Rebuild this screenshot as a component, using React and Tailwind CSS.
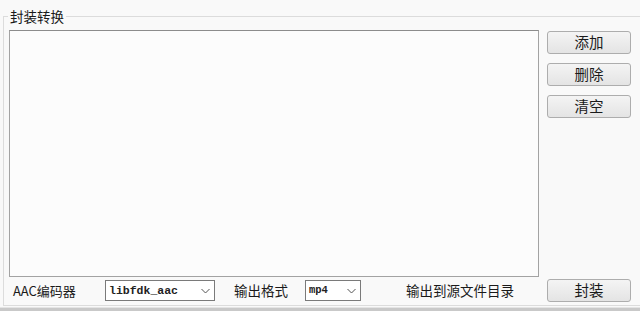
const cjk = { fontFamily: '"Noto Sans CJK SC", "Noto Sans", sans-serif' }
const mono = { fontFamily: '"Liberation Mono", "DejaVu Sans Mono", monospace' }

function Btn({ children }) {
  return (
    <button
      style={cjk}
      className="h-[23px] w-[84px] rounded-[3px] border border-[#adadad] bg-gradient-to-b from-[#f4f4f4] to-[#e4e4e4] text-[14.5px] leading-none text-[#1a1a1a]"
    >
      {children}
    </button>
  )
}

function Combo({ value, w, size = 'text-[11.5px]' }) {
  return (
    <div className={`flex h-[21px] ${w} items-center justify-between border border-[#7a7a7a] bg-white pl-[3px] pr-[4px]`}>
      <span style={mono} className={`${size} font-bold leading-none text-[#222]`}>{value}</span>
      <svg width="9" height="6" viewBox="0 0 9 6" className="text-[#555]">
        <path d="M0.5 1 L4.5 5 L8.5 1" fill="none" stroke="currentColor" strokeWidth="1" />
      </svg>
    </div>
  )
}

export default function App() {
  return (
    <div className="flex h-[311px] w-[640px] flex-col overflow-hidden bg-[#f9f9f9]">
      <fieldset className="m-0 ml-[3px] mt-[6px] h-[300px] w-[645px] border border-[#dcdcdc] px-[5px] pb-0 pt-[4px]">
        <legend style={cjk} className="ml-[-1px] px-[2px] text-[13.5px] leading-[20px] text-[#1a1a1a]">封装转换</legend>
        <div className="grid grid-cols-[530px_84px] gap-x-[8px]">
          <div className="h-[247px] border border-[#a3a3a3] border-t-[#8c8c8c] bg-[#fcfcfc]" />
          <div className="flex flex-col gap-[9px] pt-[1px]">
            <Btn>添加</Btn>
            <Btn>删除</Btn>
            <Btn>清空</Btn>
          </div>
          <div style={cjk} className="mt-[3px] flex h-[21px] items-center text-[#1a1a1a]">
            <span className="w-[96px] pl-[4px] text-[13px]">AAC编码器</span>
            <Combo value="libfdk_aac" w="w-[110px]" />
            <span className="ml-[19px] w-[71px] text-[13.5px]">输出格式</span>
            <Combo value="mp4" w="w-[56px]" size="text-[10.5px]" />
            <span className="ml-[45px] text-[13.5px]">输出到源文件目录</span>
          </div>
          <div className="mt-[1px]">
            <Btn>封装</Btn>
          </div>
        </div>
      </fieldset>
      <div className="mt-auto h-[4px] border-t border-[#e4e4e4] bg-[#c9c9c9]" />
    </div>
  )
}
